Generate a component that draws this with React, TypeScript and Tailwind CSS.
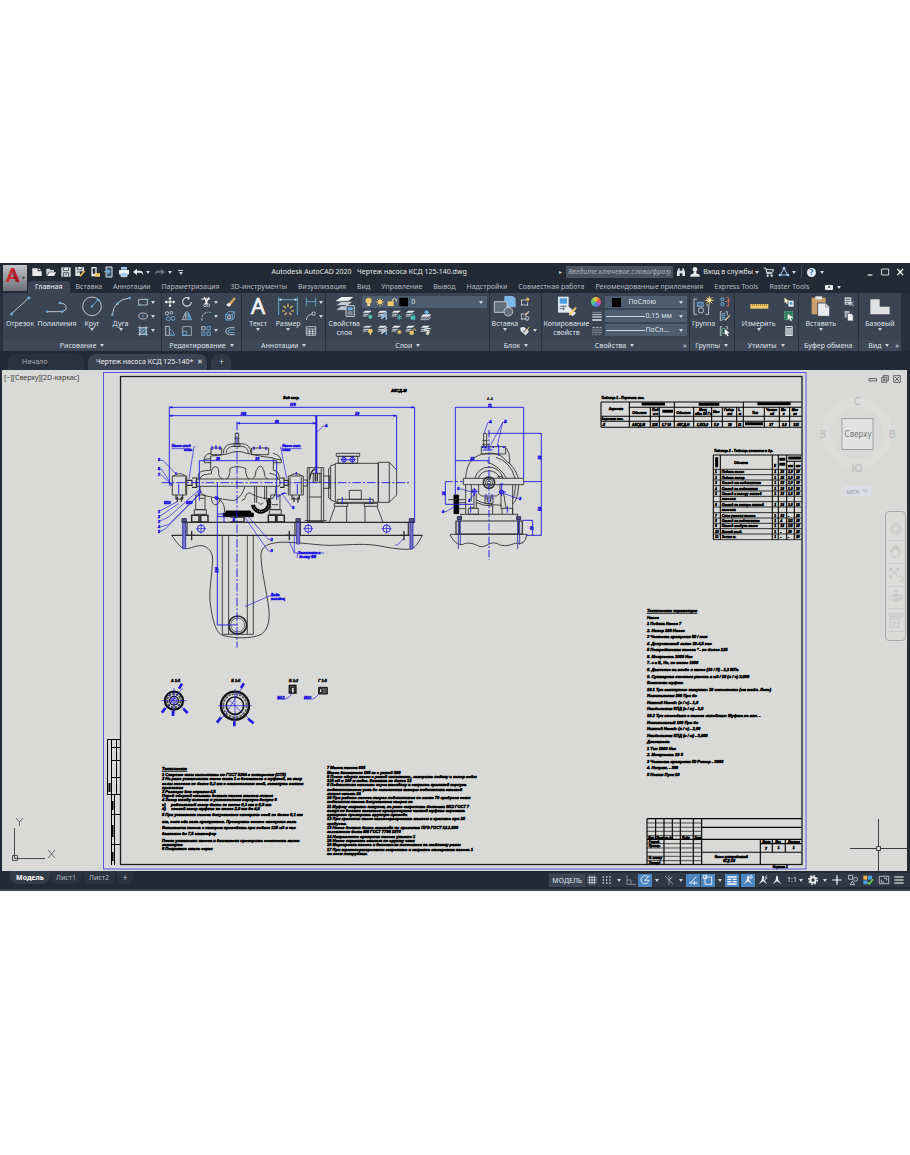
import type { ReactNode } from "react";

const L = "#d3d8de";
const B = "#74b6e6";
const Y = "#f3c969";

/* ---------- small helpers ---------- */

const Small = ({ children }: { children: ReactNode }) => (
  <svg viewBox="0 0 36 36" className="size-3 shrink-0" fill="none" stroke={L} strokeWidth="2.4">
    {children}
  </svg>
);

const Big = ({ children }: { children: ReactNode }) => (
  <svg viewBox="0 0 72 66" className="h-[22px] w-6 shrink-0 overflow-visible" fill="none" stroke={L} strokeWidth="2.6">
    {children}
  </svg>
);

const Arrow = () => (
  <svg viewBox="0 0 10 7" className="h-[3px] w-1 shrink-0" fill="#cfd4da">
    <path d="M0 0h10L5 7z" />
  </svg>
);

const Tool = ({ name, children, arrow }: { name: string; children: ReactNode; arrow?: boolean }) => (
  <button aria-label={name} className="flex items-center gap-0.5">
    <Small>{children}</Small>
    {arrow && <Arrow />}
  </button>
);

const BigTool = ({
  label,
  className,
  arrow,
  children,
}: {
  label: string;
  className: string;
  arrow?: boolean;
  children: ReactNode;
}) => (
  <button className={"flex shrink-0 flex-col items-center pt-0.5 text-center leading-[9px] " + className}>
    <Big>{children}</Big>
    <span className="mt-0.5 whitespace-pre">{label}</span>
    {arrow && (
      <span className="flex">
        <Arrow />
      </span>
    )}
  </button>
);

const Column = ({ children }: { children: ReactNode }) => (
  <div className="mt-0.5 grid h-[43px] grid-rows-3 items-center">{children}</div>
);

const Panel = ({
  title,
  className,
  arrow = true,
  more,
  children,
}: {
  title: string;
  className: string;
  arrow?: boolean;
  more?: boolean;
  children: ReactNode;
}) => (
  <section className={"flex shrink grow flex-col bg-[#3b4453] " + className}>
    <div className="flex h-[47px]">{children}</div>
    <button className="flex h-[11px] w-full items-center justify-center gap-1 bg-[#3f4857] leading-[11px]">
      {more && <span className="flex-1" />}
      {title}
      {arrow && <Arrow />}
      {more && <span className="flex-1 pr-0.5 text-right">»</span>}
    </button>
  </section>
);

/* ---------- title bar ---------- */

const TitleBar = () => (
  <div className="flex h-[18px] items-center">
    <div className="flex items-center gap-0.5 pl-[3px]">
      <button aria-label="Создать">
        <Small>
          <path d="M4 7h16v9h12v14H4z" fill="#e8ebee" stroke="none" />
          <path d="M23 6l8 7h-8z" fill="#e8ebee" stroke="none" />
        </Small>
      </button>
      <button aria-label="Открыть">
        <Small>
          <path d="M4 29V8h10l3 4h10v5H12z" fill="#cfd4da" stroke="none" />
          <path d="M13 19h20l-6 11H6z" fill="#e8ebee" stroke="none" />
        </Small>
      </button>
      <button aria-label="Сохранить" className="ml-px">
        <Small>
          <path d="M4 4h28v28H4z" fill="#dfe3e7" stroke="none" />
          <path d="M10 4v10h16V4M10 32V20h16v12M14 25h8" stroke="#2a3440" />
        </Small>
      </button>
      <button aria-label="Сохранить как">
        <Small>
          <path d="M4 3h26v13H18v14H4z" fill="#dfe3e7" stroke="none" />
          <path d="M10 3v8h14V3M9 18h9" stroke="#2a3440" />
          <path d="M32 14L18 31" stroke="#f0b45c" strokeWidth="5" />
        </Small>
      </button>
      <button aria-label="Открыть из веб" className="ml-px">
        <Small>
          <path d="M7 3h16v28H7z" fill="#dfe3e7" stroke="none" />
          <path d="M11 7h8v16h-8z" fill="#2a3440" stroke="none" />
          <path d="M18 20h5l2 2h8v10H18z" fill={Y} stroke="none" />
        </Small>
      </button>
      <button aria-label="Сохранить в веб">
        <Small>
          <path d="M9 3h18v30H9z" fill="#3a5670" stroke="#dfe3e7" strokeWidth="3" />
          <path d="M4 17h14M13 11l7 6-7 6" stroke="#74b6e6" strokeWidth="4" />
        </Small>
      </button>
      <button aria-label="Печать" className="ml-px">
        <Small>
          <path d="M9 3h18v8H9z" fill="#9ccbee" stroke="none" />
          <path d="M3 12h30v13H3z" fill="#eef0f2" stroke="none" />
          <path d="M9 20h18v12H9z" fill="#9ccbee" stroke="#eef0f2" />
        </Small>
      </button>
      <button aria-label="Отменить" className="flex items-center gap-0.5">
        <Small>
          <path d="M3 18l12-10v6h9q9 0 10 13-4-7-10-7h-9v7z" fill="#e8ebee" stroke="none" />
        </Small>
        <Arrow />
      </button>
      <button aria-label="Повторить" className="ml-0.5 flex items-center gap-0.5">
        <Small>
          <path d="M33 18L21 8v6h-9q-9 0-10 13 4-7 10-7h9v7z" fill="#68717d" stroke="none" />
        </Small>
        <Arrow />
      </button>
      <button aria-label="Настройка панели" className="flex flex-col items-center gap-px pl-1">
        <span className="h-px w-[5px] bg-[#cfd4da]" />
        <Arrow />
      </button>
    </div>
    <h1 className="flex-1 pr-1 text-center whitespace-pre text-[#e3e6ea]">
      Autodesk AutoCAD 2020{"   "}Чертеж насоса КСД 125-140.dwg
    </h1>
    <div className="flex items-center">
      <span className="mr-1 text-[6px]">▸</span>
      <input
        aria-label="Поиск"
        placeholder="Введите ключевое слово/фразу"
        className="h-3 w-[107px] bg-[#49525f] px-0.5 text-[7px] italic outline-none placeholder:text-[#a9b0b9]"
      />
      <button aria-label="Найти" className="ml-0.5">
        <Small>
          <path d="M6 30V18l4-11h4v23zM30 30V18L26 7h-4v23zM14 14h8v8h-8z" fill="#dfe3e7" stroke="none" />
        </Small>
      </button>
      <button className="ml-0.5 flex items-center gap-0.5 whitespace-nowrap text-[#e3e6ea]">
        <Small>
          <circle cx="18" cy="10" r="7" fill="#e8ebee" stroke="none" />
          <path d="M14 16h8v6l10 4v6H4v-6l10-4z" fill="#e8ebee" stroke="none" />
        </Small>
        Вход в службы
        <Arrow />
      </button>
      <button aria-label="Магазин" className="ml-1">
        <Small>
          <path d="M2 6h6l4 17h16M9 11h23l-4 8H12" stroke="#dfe3e7" strokeWidth="3" />
          <circle cx="14" cy="29" r="2.5" fill="#dfe3e7" />
          <circle cx="26" cy="29" r="2.5" fill="#dfe3e7" />
        </Small>
      </button>
      <button aria-label="Autodesk App Store" className="ml-[3px] flex items-center gap-0.5">
        <Small>
          <path d="M18 7L7 27h22z" stroke="#a8cdf2" strokeWidth="3" />
          <g fill="#a8cdf2" stroke="none">
            <circle cx="18" cy="7" r="4" />
            <circle cx="6" cy="27" r="4" />
            <circle cx="30" cy="27" r="4" />
          </g>
        </Small>
        <Arrow />
      </button>
      <span className="mx-[5px] h-3 w-px bg-[#46505d]" />
      <button aria-label="Справка" className="flex items-center gap-1">
        <span className="flex size-[9px] items-center justify-center rounded-full bg-[#e6eef8] text-[8px] leading-none font-bold text-[#2f5f9e]">
          ?
        </span>
        <Arrow />
      </button>
      <div className="ml-10 flex items-center gap-[3px] pr-1">
        <button aria-label="Свернуть">
          <Small>
            <path d="M11 27h14" stroke="#fff" strokeWidth="3.5" />
          </Small>
        </button>
        <button aria-label="Развернуть">
          <Small>
            <path d="M8 9h21v18H8z" stroke="#fff" />
          </Small>
        </button>
        <button aria-label="Закрыть">
          <Small>
            <path d="M10 9l17 18M27 9L10 27" stroke="#fff" strokeWidth="3.5" />
          </Small>
        </button>
      </div>
    </div>
  </div>
);

const ribbonTabs = [
  "Вставка",
  "Аннотации",
  "Параметризация",
  "3D-инструменты",
  "Визуализация",
  "Вид",
  "Управление",
  "Вывод",
  "Надстройки",
  "Совместная работа",
  "Рекомендованные приложения",
  "Express Tools",
  "Raster Tools",
];

const RibbonTabs = () => (
  <nav className="flex h-3 text-[#b4bac3]">
    <button className="rounded-t bg-[#3b4453] px-[7px] text-[#eef0f3]">Главная</button>
    <div className="flex gap-[11px] pl-1.5">
      {ribbonTabs.map((t) => (
        <button key={t} className="whitespace-nowrap">
          {t}
        </button>
      ))}
    </div>
    <button aria-label="Свернуть ленту" className="ml-4 flex items-center gap-1">
      <span className="flex h-[5px] w-2 items-center justify-center rounded-[1px] bg-[#e8ebee]">
        <span className="size-0.5 rounded-full bg-[#2a3440]" />
      </span>
      <Arrow />
    </button>
  </nav>
);

/* ---------- ribbon ---------- */

const LayerStack = ({ children, top = "#e8ebee" }: { children?: ReactNode; top?: string }) => (
  <>
    <path d="M10 5h20l-8 6H2z" fill={top} stroke="none" />
    <path d="M4 16h16M2 21h14" strokeWidth="3" />
    {children}
  </>
);

const Ribbon = () => (
  <div className="flex gap-px bg-[#27303b] pr-[9px] pl-[3px] text-[#dde1e6]">
    <Panel title="Рисование" className="basis-[158px]">
      <BigTool label="Отрезок" className="w-[34px]">
        <path d="M10 57L62 9" stroke={L} />
        <path d="M8 55h5v5H8zM60 6h5v5h-5z" fill={B} stroke={B} />
      </BigTool>
      <BigTool label="Полилиния" className="w-10">
        <path d="M6 50h46q14-4 12-14-3-12-18-12" />
        <path d="M5 48h4v4H5zM50 48h4v4h-4zM42 22h4v4h-4z" fill={B} stroke={B} />
      </BigTool>
      <BigTool label="Круг" className="w-[30px]" arrow>
        <circle cx="36" cy="34" r="28" />
        <path d="M36 34l18-20" stroke={B} />
        <path d="M34 32h4v4h-4zM53 13h4v4h-4z" fill={B} stroke={B} />
      </BigTool>
      <BigTool label="Дуга" className="w-[27px]" arrow>
        <path d="M10 60Q14 14 62 9" />
        <path d="M8 57h4v4H8zM24 24h4v4h-4zM60 7h4v4h-4z" fill={B} stroke={B} />
      </BigTool>
      <div className="ml-[3px]">
        <Column>
          <Tool name="Прямоугольник" arrow>
            <path d="M5 10h26v17H5z" />
            <path d="M4 25h3v3H4zM29 9h3v3h-3z" stroke={B} />
          </Tool>
          <Tool name="Эллипс" arrow>
            <ellipse cx="18" cy="18" rx="13" ry="9" />
            <path d="M17 17h2v2h-2zM30 17h2v2h-2z" stroke={B} />
          </Tool>
          <Tool name="Штриховка" arrow>
            <path d="M8 8h20v20H8z" fill="#4c6a88" stroke={B} />
            <path d="M8 2v32M28 2v32M2 8h32M2 28h32M8 18L18 8M8 28L28 8M18 28l10-10" strokeWidth="1.8" />
          </Tool>
        </Column>
      </div>
    </Panel>

    <Panel title="Редактирование" className="basis-[79px]">
      <div className="ml-0.5">
        <Column>
          <Tool name="Перенести">
            <path d="M18 5v26M5 18h26" stroke="#fff" strokeWidth="3" />
            <path d="M18 2l5 7H13zM18 34l5-7H13zM2 18l7-5v10zM34 18l-7-5v10z" fill="#fff" stroke="none" />
          </Tool>
          <Tool name="Копировать">
            <circle cx="9" cy="10" r="5" />
            <circle cx="22" cy="8" r="4" />
            <circle cx="13" cy="26" r="6" stroke={B} />
            <circle cx="27" cy="25" r="6" stroke={B} />
          </Tool>
          <Tool name="Растянуть">
            <path d="M5 4h11v27H5z" />
            <path d="M16 12q15 6 15 19H16M20 24l6 5" stroke={B} />
          </Tool>
        </Column>
      </div>
      <div className="ml-[5px]">
        <Column>
          <Tool name="Повернуть">
            <path d="M24 6A13 13 0 1 0 31 18" strokeWidth="3.4" />
            <path d="M18 2l10 4-7 7z" fill={L} stroke="none" />
          </Tool>
          <Tool name="Зеркало">
            <path d="M14 7v22H4z" />
            <path d="M22 7v22h10z" fill="#3f7cb0" stroke={B} />
            <path d="M18 3v30" strokeDasharray="3 2" />
          </Tool>
          <Tool name="Масштаб">
            <path d="M5 5h26v26H5z" strokeWidth="2" />
            <path d="M5 19h12v12H5z" stroke={B} />
          </Tool>
        </Column>
      </div>
      <div className="ml-[7px]">
        <Column>
          <Tool name="Обрезать" arrow>
            <path d="M4 9h26" stroke="#fff" strokeWidth="3" />
            <path d="M13 3l9 22M27 4L16 24" stroke="#fff" strokeWidth="4" />
            <circle cx="15" cy="28" r="4" />
            <circle cx="25" cy="28" r="4" />
          </Tool>
          <Tool name="Сопряжение" arrow>
            <path d="M6 32V22Q8 8 24 7" strokeDasharray="8 3" />
            <path d="M26 7h7" stroke={B} />
          </Tool>
          <Tool name="Массив" arrow>
            <path d="M5 5h10v10H5z" />
            <path d="M21 5h10v10H21zM5 21h10v10H5zM21 21h10v10H21z" stroke={B} />
          </Tool>
        </Column>
      </div>
      <div className="ml-1.5">
        <Column>
          <Tool name="Стереть">
            <path d="M31 4L14 22l6 5L35 8z" fill="#e2a860" stroke="none" />
            <path d="M14 20l8 7-7 5-9-5z" fill="#f4f0e8" stroke="none" />
          </Tool>
          <Tool name="Расчленить">
            <path d="M5 14l8-9h18v16l-6 9H5zM5 14h20v16M25 14l6-9" stroke={B} />
            <path d="M11 18h9v8h-9z" />
          </Tool>
          <Tool name="Подобие">
            <path d="M32 8H17Q5 9 5 18t12 11h15" />
            <path d="M32 14H19q-7 0-7 4.500t7 4.500h13" stroke={B} />
          </Tool>
        </Column>
      </div>
    </Panel>

    <Panel title="Аннотации" className="basis-[83px]">
      <BigTool label="Текст" className="w-8" arrow>
        <text x="36" y="57" textAnchor="middle" fontSize="66" fontFamily="Noto Sans" fill="#f1f3f5" stroke="#f1f3f5" strokeWidth="2">
          A
        </text>
      </BigTool>
      <BigTool label="Размер" className="w-7" arrow>
        <path d="M8 6v54M64 6v54M8 14h56" stroke={B} />
        <path d="M8 14l8-4v8zM64 14l-8-4v8z" fill={L} stroke="none" />
        <path d="M36 26v10M22 32l8 8M50 32l-8 8M18 48h9M54 48h-9M26 60l6-7M46 60l-6-7" stroke={Y} strokeWidth="3.5" />
      </BigTool>
      <div className="ml-[3px]">
        <Column>
          <Tool name="Линейный размер" arrow>
            <path d="M4 5v26M32 5v26M4 17h28" stroke={B} />
          </Tool>
          <Tool name="Выноска" arrow>
            <path d="M4 30Q6 14 22 12" />
            <circle cx="26" cy="11" r="5" />
          </Tool>
          <Tool name="Таблица">
            <path d="M4 5h28v26H4zM4 12h28M4 19h28M4 25h28M13 12v19M23 12v19" />
          </Tool>
        </Column>
      </div>
    </Panel>

    <Panel title="Слои" className="basis-[163px]">
      <BigTool label={"Свойства\nслоя"} className="w-9">
        <path d="M28 6h36L48 19H10z" fill="#f1f3f5" stroke="none" />
        <path d="M28 19h36L48 32H10zM28 32h30L44 46H10z" fill="#c4c9d0" stroke="#3b4453" />
        <path d="M42 32h25v32H42z" fill="#3e4856" stroke="#dfe8f2" />
        <path d="M47 37h15v9H47z" fill="#6aafe0" stroke="none" />
        <path d="M47 51h15M47 57h15" />
      </BigTool>
      <div className="flex-1 pt-[3px] pr-0.5">
        <div className="flex h-3 items-center bg-[#4f5d70] pr-1">
          <svg viewBox="0 0 141 36" className="h-3 w-[47px] shrink-0">
            <circle cx="20" cy="14" r="9" fill={Y} />
            <path d="M16 22h8v8h-8z" fill="#f5e3b0" />
            <circle cx="54" cy="18" r="7" fill={Y} />
            <path d="M54 5v26M41 18h26M45 9l18 18M63 9L45 27" stroke={Y} strokeWidth="2" />
            <path d="M77 16h18v14H77z" fill={Y} />
            <path d="M92 16v-5q6-7 11 0v6" fill="none" stroke="#f5e3b0" strokeWidth="3" />
            <path d="M112 5h26v26h-26z" fill="#000" />
          </svg>
          <select aria-label="Слой" className="min-w-0 flex-1 appearance-none pl-0.5 text-[7px] leading-3 outline-none">
            <option>0</option>
          </select>
          <Arrow />
        </div>
        <div className="grid h-[29px] w-[72px] grid-cols-5 grid-rows-2 items-center">
          <Tool name="Отключить слой">
            <LayerStack>
              <circle cx="25" cy="23" r="6" fill="#4ec3b5" stroke="none" />
            </LayerStack>
          </Tool>
          <Tool name="Изолировать слой">
            <LayerStack>
              <path d="M14 22l16-12M12 29l18-12M28 22v10" stroke="#a8cdf2" strokeWidth="4" />
            </LayerStack>
          </Tool>
          <Tool name="Заморозить слой">
            <LayerStack>
              <path d="M25 17v15M18 21l14 8M32 21l-14 8" stroke="#4ec3b5" strokeWidth="3" />
            </LayerStack>
          </Tool>
          <Tool name="Блокировать слой">
            <LayerStack>
              <path d="M17 21h14v11H17z" fill="#4ec3b5" stroke="none" />
              <path d="M20 21v-4q4-5 8 0v4" stroke="#4ec3b5" />
            </LayerStack>
          </Tool>
          <Tool name="Сделать текущим">
            <path d="M10 16h24l-9 7H2z" fill="#e8ebee" stroke="none" />
            <path d="M2 27h22l8-6M2 32h22l8-6" />
            <path d="M20 3l8 7-8 7-8-7z" fill={B} stroke="none" />
          </Tool>
          <Tool name="Включить все слои">
            <LayerStack top="#c4c9d0">
              <circle cx="25" cy="21" r="7" fill={Y} stroke="none" />
              <path d="M25 26v7" stroke={Y} strokeWidth="4" />
            </LayerStack>
          </Tool>
          <Tool name="Отменить изоляцию">
            <LayerStack>
              <path d="M14 22l16-12M12 29l18-12" strokeWidth="4" />
              <path d="M28 22v10" stroke={B} strokeWidth="4" />
            </LayerStack>
          </Tool>
          <Tool name="Разморозить">
            <LayerStack>
              <circle cx="25" cy="24" r="4" fill={Y} stroke="none" />
              <path d="M25 16v16M17 24h16M19 18l12 12M31 18L19 30" stroke={Y} strokeWidth="1.6" />
            </LayerStack>
          </Tool>
          <Tool name="Разблокировать">
            <LayerStack>
              <path d="M14 21h12v11H14z" fill={Y} stroke="none" />
              <path d="M24 21v-4q4-5 8 0v4" stroke={Y} />
            </LayerStack>
          </Tool>
          <Tool name="Копировать свойства слоя">
            <LayerStack>
              <path d="M14 14h18M12 20h16" strokeWidth="4" />
              <path d="M20 22h10l-4 10h-8z" fill="#e9dcc8" stroke="none" />
            </LayerStack>
          </Tool>
        </div>
      </div>
    </Panel>

    <Panel title="Блок" className="basis-[51px]">
      <BigTool label="Вставка" className="w-[29px]" arrow>
        <path d="M34 3h26l8 8v26H34z" fill="#7db9e8" stroke="none" />
        <path d="M4 20h38v32H4z" fill="#65707f" stroke={L} />
        <circle cx="46" cy="50" r="13" fill="#65707f" />
      </BigTool>
      <Column>
        <Tool name="Создать блок">
          <path d="M5 12h16M8 12v15h18M5 27h5M26 18v12" />
          <path d="M26 4v12M20 10h12M22 6l8 8M30 6l-8 8" stroke={Y} />
        </Tool>
        <Tool name="Редактор блоков">
          <path d="M5 12h16M8 12v15h18M5 27h5" />
          <circle cx="24" cy="25" r="6" />
          <path d="M30 4L18 17" stroke="#e9d2a4" strokeWidth="4" />
        </Tool>
        <Tool name="Атрибуты" arrow>
          <path d="M4 8l10-3 16 14-10 12L5 18z" fill="#e8ebee" stroke="none" />
          <path d="M12 16l4 6 6-12" stroke="#3b4453" />
          <path d="M32 5L20 20" stroke={Y} strokeWidth="3" />
        </Tool>
      </Column>
    </Panel>

    <Panel title="Свойства" className="basis-[146px]" more>
      <BigTool label={"Копирование\nсвойств"} className="w-12">
        <path d="M12 5h32v48H12z" fill="#dfe8f2" stroke="none" />
        <path d="M17 10h22v16H17z" fill="#4c9ddb" stroke="none" />
        <path d="M17 34h22M17 41h22M28 30v16" stroke="#5c6673" />
        <path d="M34 36h12l20 18-10 10-22-20z" fill="#e8ebee" stroke="none" />
        <path d="M66 38L46 60" stroke={Y} strokeWidth="6" />
      </BigTool>
      <div className="ml-px">
        <Column>
          <button aria-label="Цвет" className="size-2.5 rounded-full bg-[conic-gradient(#f5c842,#e8553d,#b457c9,#4a7be0,#46c0b4,#7fcf4f,#f5c842)]" />
          <Tool name="Вес линий">
            <path d="M4 7h28" strokeWidth="1.500" />
            <path d="M4 14h28" strokeWidth="3" />
            <path d="M4 21h28" strokeWidth="4" />
            <path d="M4 30h28" strokeWidth="5" />
          </Tool>
          <Tool name="Тип линий">
            <path d="M4 8h28" strokeDasharray="8 3" />
            <path d="M4 15h28M4 22h28" strokeDasharray="4 2" />
            <path d="M4 29h28" strokeDasharray="2 2" />
          </Tool>
        </Column>
      </div>
      <div className="ml-0.5 flex flex-1 flex-col gap-0.5 pt-[3px] pr-0.5">
        <div className="flex h-3 items-center bg-[#4f5d70] pr-1 pl-[7px]">
          <span className="size-[9px] bg-black" />
          <select aria-label="Цвет объекта" className="min-w-0 flex-1 appearance-none pl-[7px] text-[7px] outline-none">
            <option>ПоСлою</option>
          </select>
          <Arrow />
        </div>
        <div className="flex h-3 items-center bg-[#4f5d70] pr-1 pl-px">
          <span className="h-px w-[39px] bg-[#d3d8de]" />
          <select aria-label="Вес линии" className="min-w-0 flex-1 appearance-none text-[7px] outline-none">
            <option>0.15 мм</option>
          </select>
          <Arrow />
        </div>
        <div className="flex h-3 items-center bg-[#4f5d70] pr-1 pl-px">
          <span className="h-px w-[39px] bg-[#d3d8de]" />
          <select aria-label="Тип линии" className="min-w-0 flex-1 appearance-none text-[7px] outline-none">
            <option>ПоСл...</option>
          </select>
          <Arrow />
        </div>
      </div>
    </Panel>

    <Panel title="Группы" className="basis-11">
      <BigTool label="Группа" className="w-7">
        <path d="M16 12H6v46h10M42 30h8v28H40" />
        <path d="M16 22h18v12H16z" fill="#4c6a88" stroke={B} />
        <circle cx="27" cy="46" r="8" />
        <path d="M52 3v26M39 16h26M43 7l18 18M61 7L43 25" stroke={Y} strokeWidth="3" />
        <circle cx="52" cy="16" r="6" fill="#f7dfa0" stroke="none" />
      </BigTool>
      <div className="ml-px">
        <Column>
          <Tool name="Разгруппировать">
            <path d="M6 6h8v8H6zM6 20h8v8H6z" stroke={B} />
            <path d="M22 5h7v25h-7M18 17l14-4" stroke="#e0705c" />
          </Tool>
          <Tool name="Редактировать группу">
            <path d="M9 5H4v26h5M20 5h5v10" />
            <path d="M9 10h8v8H9zM9 22h8v6H9z" stroke={B} />
            <path d="M32 16L18 31" stroke="#e9d2a4" strokeWidth="4" />
          </Tool>
          <Tool name="Выбор группы">
            <path d="M9 5H4v26h5M20 5h5v8" />
            <path d="M9 10h8v16H9z" stroke="#5cc79a" />
            <path d="M18 12l14 13h-7l4 8-4 1-3-8-4 4z" fill="#fff" stroke="none" />
          </Tool>
        </Column>
      </div>
    </Panel>

    <Panel title="Утилиты" className="basis-[63px]">
      <BigTool label="Измерить" className="w-12" arrow>
        <path d="M10 27h54v14H10z" fill={Y} stroke="none" />
        <path d="M16 27v6M22 27v6M28 27v6M34 27v6M40 27v6M46 27v6M52 27v6M58 27v6" stroke="#6c5a2c" strokeWidth="2" />
      </BigTool>
      <Column>
        <Tool name="Быстрый выбор">
          <path d="M16 14h16v18H16z" fill="#e8ebee" stroke="none" />
          <path d="M20 18h8v8h-8z" fill="#4c9ddb" stroke="none" />
          <path d="M5 6l12 9-5 1 2 6-3 1-3-6-3 3z" fill="#fff" stroke={Y} strokeWidth="1" />
        </Tool>
        <Tool name="Выбрать все">
          <path d="M5 5h24v24H5z" fill="#2e7a5c" stroke="#5cc79a" strokeDasharray="5 2" />
          <path d="M14 11l17 12-8 1 4 8-4 1-4-8-5 4z" fill="#fff" stroke="none" />
        </Tool>
        <Tool name="Калькулятор">
          <path d="M7 3h22v30H7z" fill="#dfe3e7" stroke="none" />
          <path d="M10 8h16" stroke="#4a5462" strokeWidth="4" />
          <path d="M10 15h16M10 21h16M10 27h16" stroke="#4a5462" strokeWidth="3" strokeDasharray="4 2" />
        </Tool>
      </Column>
    </Panel>

    <Panel title="Буфер обмена" className="basis-[59px]" arrow={false}>
      <BigTool label="Вставить" className="w-11" arrow>
        <path d="M8 8h42v50H8z" fill="#c99f6b" stroke="none" />
        <path d="M19 4h20v9H19z" fill="#e8ebee" stroke="none" />
        <path d="M26 24h24l12 12v28H26z" fill="#e8ebee" stroke="#3b4453" />
        <path d="M50 24v12h12" stroke="#8b939e" />
      </BigTool>
      <Column>
        <Tool name="Вырезать">
          <path d="M5 4h20v22H5z" fill="#cfd4da" stroke="none" />
          <path d="M8 10h14M8 16h14M8 22h8" stroke="#4a5462" />
          <path d="M20 16l12 14M32 16L20 30" />
        </Tool>
        <Tool name="Копировать">
          <path d="M5 3h15v20H5z" fill="#aab1ba" stroke="none" />
          <path d="M13 10h11l7 6v17H13z" fill="#eef0f2" stroke="#3b4453" />
        </Tool>
      </Column>
    </Panel>

    <Panel title="Вид" className="basis-[42px]" more>
      <BigTool label="Базовый" className="w-full" arrow>
        <path d="M7 13h28v22h30v23H7z" fill="#dfe1e2" stroke="none" />
      </BigTool>
    </Panel>
  </div>
);

const FileTabs = () => (
  <div className="flex h-[19px] items-end gap-1 bg-[#222b35] pl-2 text-[#c6cbd2]">
    <button className="h-4 w-[76px] rounded-t-lg bg-[#29323d] pl-3.5 text-left text-[#a9b0b9]">Начало</button>
    <div className="flex h-4 items-center gap-1 rounded-t-lg bg-[#3b4453] pr-1 pl-2 text-[#eef0f3]">
      <button>Чертеж насоса КСД 125-140*</button>
      <button aria-label="Закрыть чертеж">✕</button>
    </div>
    <button aria-label="Новый чертеж" className="h-4 w-5 rounded-t-lg bg-[#303945] text-[9px]">
      +
    </button>
  </div>
);

/* ---------- drawing ---------- */

const workNotes: [number, string][] = [
  [325, "Технические"],
  [343, "1 Сварные швы выполнить по ГОСТ 5264 с контролем (ОТК)"],
  [356, "2 На раме установить насос типа 1 и двигатель с муфтой, на валу"],
  [369, "валы насосов не более 0,2 мм с отклонением осей, затянуть винты"],
  [381, "крепления"],
  [394, "3 Размеры для справок 4,5"],
  [407, "Перед сборкой смазать детали насоса маслом литол"],
  [419, "4 Зазор между колесом и уплотнением корпуса допуск 6"],
  [432, "а)     радиальный зазор быть не менее 0,3 мм и 0,5 мм"],
  [445, "б)     осевой зазор муфты не менее 2,0 мм до 4,0"],
  [463, "5 При установке насоса допускается смещение осей не более 0,1 мм"],
  [483, "мм, если оба вала вращаются. Проверить осевое смещение вала"],
  [502, "Испытания насоса с напором проводить при подаче 125 м3 в час"],
  [521, "давление до 7,5 атмосфер"],
  [540, "После установки насоса и двигателя проверить соосность валов"],
  [552, "затянуть"],
  [565, "6 Покрытие эмаль серая"],
];

const pumpNotes: [number, string][] = [
  [53, "7 Масса насоса 635"],
  [67, "Масса двигателя 165 кг с рамой 300"],
  [79, "8 После сборки насос с рамой испытать, замерить подачу и напор воды"],
  [91, "125 м3 и 140 м воды. Затяжка не более 12"],
  [104, "9 Подшипники смазать через маслёнку и закрыть крышкой корпуса"],
  [118, "подшипникового узла до заполнения камеры подшипника смазкой"],
  [130, "литол смазка 24"],
  [142, "10 При работе насоса нагрев подшипников не выше 70 градусов сети"],
  [155, "подшипник насоса допускается нагрев не"],
  [168, "11 Муфту закрыть кожухом, на раме закрепить болтами М12 ГОСТ 7"],
  [181, "кожух не должен касаться вращающихся частей муфты агрегата"],
  [193, "вращение проверить вручную привода"],
  [206, "12 При хранении насос законсервировать маслом и хранить при 25"],
  [220, "градусов."],
  [232, "13 Насос должен быть заземлён по правилам ПУЭ ГОСТ 12.1.030"],
  [245, "заземление болт М8 ГОСТ 7798 1970"],
  [258, "14 Направление вращения насоса указано 1"],
  [271, "15 Насос окрасить эмалью по грунту слоя"],
  [284, "16 Маркировка насоса и двигателя наносится на табличку рамы"],
  [297, "17 При транспортировании закрепить и закрыть отверстия насоса 1"],
  [310, "по всем патрубкам."],
];

const techData = [
  "Технические параметры",
  "Насос",
  "1 Подача Насос 7",
  "2. Напор 100 Насос",
  "3 Частота вращения 50 / мин",
  "4. Допускаемый запас 10-4,5 нас",
  "5 Потребляемая насоса   * -  не более 125",
  "6. Мощность 1000 Нас",
  "7. с а Б, Нс, не менее 1000",
  "8. Давление на входе в насос (10 / П) - 1,2 МПа",
  "9. Суммарная внешняя утечка в м3 / 10 (л / ч) 3,000",
  "Комплект муфта",
  "10.1 Три замкнутые катушки: 10 исполнение (см табл. Лопа)",
  "Номинальная 100 При бо",
  "Нижний Насад: (л / ч) - 1,0",
  "Наибольшая КПД (г / м) - 3,0",
  "10.2 Три способами с насосе линейных: Муфта не вкл. -",
  "Номинальный 100 При бо",
  "Нижний Насад: (л / ч) - 2,00",
  "Наибольшая КПД (г / м) - 3,000",
  "Двигатель",
  "1 Тип 1000 Нас",
  "2. Мощность 10 5",
  "3 Частота вращения 50 Ротор - 3000",
  "4. Напряж. - 380",
  "5 Номин Пуск 10",
];

const partsList = [
  ["1", "Подача насос", "1", "25", "1,0"],
  ["2", "Подача напор", "1", "25", "1,0"],
  ["3", "Отвод от подшипника", "1", "18", "1,0"],
  ["4", "Отвод на подшипник", "1", "18", "1,0"],
  ["5", "Отвод к напору линией", "1", "18", "1,0"],
  ["", "насосом", "", "", ""],
  ["6", "Отвод на напоре линией", "1", "18", "1,0"],
  ["", "насосом", "", "", ""],
  ["7", "Слив утечек насоса", "1", "18", "-"],
  ["8", "Отвод из подшипника", "1", "4", "1/2"],
  ["9", "Отвод воздуха насос", "1", "18", "1/2"],
  ["10", "Выход возд.", "1", "-", "10"],
  ["11", "Залив м.", "1", "-", "-"],
];

const FrontView = () => (
  <g transform="translate(100 370) scale(.3333)" fill="none" stroke="#2b2b2b" strokeWidth="2.6">
    {/* foundation, frame and pit */}
    <path d="M245 457h700M215 496h752M261 457v39M925 457v39M585 457v39M601 457v39" strokeWidth="3.400" />
    <path d="M215 496C235 525 245 538 262 536C280 532 290 526 305 527C325 530 338 545 338 570C335 620 328 660 330 690C335 740 345 790 370 797C410 806 450 806 480 795C500 785 510 760 507 720C500 660 485 610 483 560C482 530 500 520 540 517C600 515 660 528 700 526C760 524 800 520 840 528C880 536 915 540 935 537C950 530 960 510 967 496" />
    <path d="M367 496v297h93V496M386 496v297M442 496v297" />
    <circle cx="413" cy="765" r="27" strokeWidth="5" />
    <circle cx="413" cy="765" r="21" strokeWidth="2" />
    {/* motor */}
    <path d="M706 280h129v117H706zM835 277h33v120h-33zM868 277l22 23v75l-22 22M706 283l-14 4v103l14 5M692 292l-6 4v88l6 3" />
    <path d="M709 250h70v9h-70zM715 259h58v21h-58zM748 361h36v27h-36zM712 388h108v12H712zM703 400h40v9h-40zM793 400h40v9h-40z" />
    <path d="M705 409l-17 48M740 409v48M795 409v48M831 409l18 48" />
    {/* coupling guard */}
    <path d="M622 293h49v162h-49zM628 293v162M664 293v162M628 381h36M614 452h66M671 318h18v37h-18M610 330h12v18h-12M636 310h28M636 337h28M640 310v27M660 310v27" />
    <path d="M629 330Q632 300 646 297M652 310v24M646 310v24" strokeWidth="4" />
    {/* bearings and shaft */}
    <path d="M217 318h43v57h-43zM565 318h45v57h-45zM221 318q18-14 36 0M569 318q18-14 38 0M257 322v50M570 322v50M604 322v50" />
    <path d="M260 331h16v15h-16M276 324h14v28h-14M540 324h12v28h-12M552 331h13v15h-13M228 375v12h20v-12M576 375v12h22v-12M232 380v16M244 380v16M582 380v16M594 380v18" strokeWidth="3.500" />
    {/* casing */}
    <rect x="288" y="327" width="252" height="22" rx="6" />
    <path d="M295 327v-14q2-12 37-12V258q30-2 50-6q30-14 58-2q44 10 80 14v37q18 0 18 26" />
    <path d="M300 327q4-14 22-14l12-2q2-22 12-21q12 0 10 24q2 10 12 13M378 327q12-2 12-32q20-10 47 0q0 30 12 32M458 327q10-6 10-24q14-30 24 0q0 18 10 24M508 310q22 2 26 17" />
    <path d="M313 278q-4-26 20-28M311 268l22-2M313 278h20M545 278q-2-24-26-28M545 270l-24-4M543 278h-22" />
    <path d="M333 234h32v20h-32zM455 234h51v20h-51zM370 250q0-28 30-29h25q27 1 28 29M378 250q2-20 22-21h24q20 1 21 21M406 190h10v31h-10zM402 221h18v8h-18zM404 205h14" />
    <path d="M300 349q-2 26 20 29q40 10 80 14q26-8 35-43M435 380q10-18 22-7q30 16 62 12q10-14 9-36M425 392q14-6 12-12M334 384q2 20 12 20q12 0 14-18M360 390q14 10 14 36" />
    <path d="M464 349v50M494 349v40M470 349v50M500 349v40M476 398q4 10 14 0" />
    <path d="M459 404A24 24 0 1 0 503 388" stroke="#000" strokeWidth="12" />
    <path d="M459 404A24 24 0 1 0 503 388" stroke="#d9dad8" strokeWidth="2" strokeDasharray="4 3" />
    <path d="M287 375h28v44h-28zM283 419h36v14h-36zM300 385h12M512 375h28v44h-28zM508 419h36v14h-36zM516 404h18" />
    <path d="M275 436h22v20h-22zM302 436h22v20h-22zM505 436h22v20h-22zM531 436h22v20h-22z" strokeWidth="4.500" />
    <path d="M370 429h90v11h-90zM378 423h74v6h-74z" fill="#000" stroke="#000" />
    <path d="M391 441h41v15h-41M262 496h26M275 483v28M555 496h26M568 483v28M899 496h26M912 483v28" strokeWidth="4" />
    {/* dimensions and leaders */}
    <g stroke="#2118e0" strokeWidth="2.800">
      <path d="M208 112h736M208 137h682M411 160h237M298 272h232M208 110v230M944 112v345M890 137v163M298 272v120M530 272v118M352 338v427h61M352 432h22M352 440h22M372 440v18" />
      <path d="M649 137v174" strokeWidth="6" />
      <path d="M411 155v678" strokeDasharray="26 6 6 6" />
      <path d="M185 338h745" strokeDasharray="26 6 6 6" />
      <path d="M176 270l14 2 38 40M176 297l10 2 28 45M176 315l8 0 32 30M176 425l56-30M176 441l60-40M176 455l30-14 84-75M176 472l30-8 92-92M176 487l20-10 104-105M215 236h57M286 230l-4 0-15 97M605 236h-62M542 230l18 96M651 187l19-19h12M578 414l-33-44M515 508h-10l-62-70M515 543h-10l-72-103M435 710l73-32h30M568 515l15 34h90M583 496v53M592 549v14M885 525h8l18-20" strokeWidth="2" />
      <circle cx="303" cy="476" r="11" />
      <circle cx="625" cy="476" r="11" />
      <circle cx="860" cy="476" r="11" />
      <path d="M288 476h30M303 461v30M610 476h30M625 461v30M845 476h30M860 461v30" strokeWidth="2" />
      <circle cx="732" cy="269" r="7" />
      <circle cx="757" cy="269" r="7" />
      <circle cx="212" cy="343" r="4" />
      <circle cx="298" cy="366" r="5" />
      <path d="M722 269h45M732 259v20M757 259v20M727 381v22M810 381v22M236 342v30M592 342v30M530 382l24-14M546 370h14" />
      <path d="M248 458v78h9v-78M590 458v64h9v-64M930 458v78h9v-78" stroke="#3a35b0" fill="#7774c4" />
      <path d="M246 446h13v10h-13zM588 446h13v10h-13zM928 446h13v10h-13z" stroke="#28285a" fill="#555580" />
      <path d="M336 228v12M348 226v12M360 228v12M462 230v10M480 226v12M498 230v10M228 306v8M589 306v8" strokeWidth="4" />
      <path d="M208 112l9-3v6zM944 112l-9-3v6zM208 137l9-3v6zM890 137l-9-3v6zM411 160l9-3v6zM648 160l-9-3v6z" fill="#2118e0" strokeWidth="1" />
    </g>
    <g className="font-['Liberation_Sans'] text-[10px] font-bold italic" fill="#2118e0" stroke="#2118e0" strokeWidth="1.6">
      <text x="570" y="109">178</text>
      <text x="422" y="135">106</text>
      <text x="766" y="135">59</text>
      <text x="525" y="159">56</text>
      <text x="348" y="270">28</text>
      <text x="466" y="270">29</text>
      <text x="215" y="232">Насос вход</text>
      <text x="252" y="242">слив</text>
      <text x="547" y="232">Насос вых.</text>
      <text x="547" y="242">слив</text>
      <text x="192" y="402">М16</text>
      <text x="258" y="401">М20</text>
      <text x="675" y="172">А</text>
      <text x="512" y="513">2</text>
      <text x="512" y="547">3</text>
      <text x="577" y="418">6</text>
      <text x="398" y="453">Б</text>
      <text x="174" y="273">9</text>
      <text x="174" y="300">8</text>
      <text x="174" y="318">7</text>
      <text x="174" y="429">1</text>
      <text x="174" y="444">2</text>
      <text x="174" y="459">3</text>
      <text x="174" y="475">4</text>
      <text x="174" y="489">5</text>
      <text x="594" y="552">Заземление к</text>
      <text x="598" y="564">болту М8</text>
      <text x="513" y="677">Вода</text>
      <text x="513" y="690">колодец</text>
      <text transform="translate(354 608) rotate(-90)">120</text>
      <text transform="translate(354 390) rotate(-90)">45</text>
    </g>
    <g className="font-['Liberation_Sans'] text-[12px] font-bold italic" fill="#000" stroke="#000" strokeWidth="1.4">
      <text x="550" y="88" className="text-[10px]">
        Вид спер.
      </text>
      <text x="873" y="65">АКСД-М</text>
    </g>
  </g>
);

const SideView = () => (
  <g transform="translate(400 370) scale(.3333)" fill="none" stroke="#2b2b2b" strokeWidth="2.6">
    <path d="M190 325h181v19H190zM197 325Q200 255 262 250Q300 246 318 272Q345 290 355 325M288 262Q332 275 345 325M262 276Q300 290 320 325M315 232q16 12 14 48" />
    <path d="M244 230h73v22h-73zM251 190h9v40h-9zM246 224h22M248 212h14" />
    <circle cx="267" cy="338" r="17" strokeWidth="4.500" />
    <circle cx="267" cy="338" r="11" />
    <circle cx="267" cy="338" r="5" />
    <path d="M225 325A43 43 0 0 1 309 325M235 325A34 34 0 0 1 299 325M292 320h16v5M236 344v26l8 8h46l10-8v-26M255 380v20h24v-20M262 380v16M272 380v16" />
    <path d="M197 344v89M214 344v50M222 370v42l-8 3M229 370v45M205 415h30v18h-30zM338 344v89M311 370l7 45M303 370v45h35v18M306 415v18M230 390q20 14 75 16M230 398q20 10 48 10M278 405v28M356 344q-2 46-18 58M346 344q0 30-8 44" />
    <path d="M180 433h175M183 433v18M352 433v18" />
    <path d="M168 453h199v39H168zM178 453v39M356 453v39" strokeWidth="3.600" />
    <path d="M150 493h70M315 493h68M150 494q16 32 36 30C205 515 220 520 240 530C262 532 270 512 292 521C310 532 330 526 348 519Q376 528 380 494M220 493h95" />
    <path d="M162 375h14v56h-14z" fill="#000" stroke="#000" />
    <path d="M145 389h50M176 398h20M176 416h20" />
    <g stroke="#2118e0" strokeWidth="2.800">
      <path d="M166 112h205M166 112v263M371 112v213M264 190h160v306h-44M371 335h53M166 272h101M136 335v68M136 335h22M166 335h8M180 335h8M136 403h84M368 451h30v45" />
      <path d="M267 180v390" strokeDasharray="22 6 6 6" />
      <path d="M252 190l12-33h12M272 226l36-69h12M292 226l16-69M130 425h8l28-16M174 357h10l34 10M207 390l16-18M362 385h-10l-44-16" strokeWidth="2" />
      <circle cx="223" cy="364" r="6" />
      <circle cx="305" cy="366" r="6" />
      <path d="M213 364h20M223 354v24M305 342v36M300 342h10M296 366h22M248 240h30M252 234h20M296 230v28M212 408v20M322 408v20M258 372v16M276 372v16" />
      <path d="M175 440v97M181 440v84M353 440v97M359 440v84" stroke="#3a35b0" />
      <path d="M172 440h12v9h-12zM350 440h12v9h-12z" stroke="#28285a" fill="#555580" />
      <path d="M248 228v6M256 228v6M280 228v6M295 224v8M311 228v6" strokeWidth="5" />
    </g>
    <g className="font-['Liberation_Sans'] text-[10px] font-bold italic" fill="#2118e0" stroke="#2118e0" strokeWidth="1.6">
      <text x="264" y="110">71</text>
      <text x="211" y="271">35</text>
      <text x="268" y="160">А</text>
      <text x="313" y="160">Б</text>
      <text x="172" y="361">5</text>
      <text x="126" y="430">4</text>
      <text x="205" y="395">6</text>
      <text x="358" y="390">2</text>
      <text transform="translate(424 268) rotate(-90)">50</text>
      <text transform="translate(424 422) rotate(-90)">56</text>
      <text transform="translate(398 480) rotate(-90)">16</text>
      <text transform="translate(136 376) rotate(-90)">24</text>
    </g>
    <text x="260" y="89" className="font-['Liberation_Sans'] text-[11px] font-bold italic" fill="#000" stroke="none">
      А-А
    </text>
  </g>
);

const Details = () => (
  <g transform="translate(0 660) scale(.3333)" fill="none" stroke="#111" strokeWidth="3">
    <circle cx="522" cy="122" r="27" strokeWidth="7" />
    <circle cx="522" cy="122" r="20" strokeWidth="5" strokeDasharray="8 3" stroke="#444" />
    <circle cx="522" cy="122" r="13" strokeWidth="4" />
    <circle cx="705" cy="137" r="42" strokeWidth="7" />
    <circle cx="705" cy="137" r="35" strokeWidth="5" strokeDasharray="8 3" stroke="#555" />
    <circle cx="705" cy="137" r="26" strokeWidth="5" />
    <path d="M868 76h20v23h-20z" fill="#555" strokeWidth="4" />
    <path d="M874 82h9v17h-9z" fill="#d9dad8" />
    <path d="M956 82h26v20h-26z" fill="#555" strokeWidth="3" />
    <path d="M958 86h8v12h-8z" fill="#d9dad8" />
    <g stroke="#2118e0" strokeWidth="2">
      <circle cx="522" cy="122" r="8" />
      <path d="M484 122h76M522 84v80M502 102l40 40M548 84l-50 62M655 137h100M705 87v104M682 114l46 46M728 80l-56 90M544 140l18 16M500 142l-14 14M672 168l-20 16M738 168l22 20" />
      <path d="M832 117h26q10-4 20-18M912 117h26q10-4 18-14" />
      <path d="M537 86l9-15M723 84l9-14M486 158l10-14M519 152v16M550 146l13 13M651 188l12-16M703 184v15M744 176l17 14" strokeWidth="8" />
    </g>
    <g className="font-['Liberation_Sans'] text-[11px] font-bold italic" strokeWidth="1.4">
      <g fill="#2118e0" stroke="#2118e0">
        <text x="832" y="116">М12</text>
        <text x="912" y="116">М10</text>
      </g>
      <g fill="#000">
        <text x="513" y="65">А 1:5</text>
        <text x="694" y="65">Б 1:5</text>
        <text x="867" y="65">В 1:2</text>
        <text x="955" y="65">Г 1:5</text>
      </g>
    </g>
  </g>
);

const Tables = () => (
  <g transform="translate(590 370) scale(.3333)" fill="none" stroke="#000" strokeWidth="3.200">
    <path d="M33 96h602M118 112h517M33 139h602M33 154h602M33 172h602M33 96v76M118 96v76M181 112v60M208 112v60M253 96v76M311 112v60M365 112v60M397 112v60M440 112v60M460 96v76M523 112v60M568 112v60M599 112v60" />
    <path d="M370 255h265M590 274h45M370 255v254M391 255v254M547 255v254M565 255v254M590 255v254M613 274v235" />
    {Array.from({ length: 14 }, (_, i) => (
      <path key={i} d={`M370 ${298 + Math.round(i * 16.2)}h265`} strokeWidth="2.4" />
    ))}
    <path d="M155 102h70M326 103h62M502 101h100M465 161h54M217 124h32M595 264h38M568 268h18M568 283h18M380 262v30" strokeWidth="9" />
    <g className="font-['Liberation_Sans'] text-[10px] font-bold italic" fill="#000" strokeWidth="1.4">
      <text x="34" y="88">Таблица 1 - Перечень нас.</text>
      <text x="372" y="247">Таблица 2 - Таблица клапанов и др.</text>
      <text x="34" y="150">Агрегат нас.</text>
      <text x="36" y="167">-К</text>
      <text x="56" y="119">Агрегат</text>
      <text x="127" y="131">Обознач</text>
      <text x="186" y="122">Под</text>
      <text x="189" y="134">м.ч</text>
      <text x="259" y="131">Обознач</text>
      <text x="327" y="122">Мощ</text>
      <text x="315" y="134">кВт 50 Гц</text>
      <text x="369" y="128">Мас</text>
      <text x="402" y="122">Габар</text>
      <text x="412" y="134">мм</text>
      <text x="445" y="122">L</text>
      <text x="446" y="134">м</text>
      <text x="486" y="131">Тип</text>
      <text x="528" y="122">Часто</text>
      <text x="540" y="134">об</text>
      <text x="573" y="122">Мо</text>
      <text x="578" y="134">к</text>
      <text x="605" y="122">Мас</text>
      <text x="610" y="134">кг</text>
      <text x="432" y="281">Обознач</text>
      <text x="552" y="290">К</text>
      <text x="594" y="290">мм</text>
      <text x="617" y="290">мм</text>
      <text x="126" y="167">АКСД-М</text>
      <text x="186" y="167">125</text>
      <text x="215" y="167">1,7 10</text>
      <text x="260" y="167">АКСД-Н</text>
      <text x="320" y="167">1,5Х3,0</text>
      <text x="372" y="167">5,9</text>
      <text x="414" y="167">10</text>
      <text x="444" y="167">11</text>
      <text x="538" y="167">37</text>
      <text x="576" y="167">3,0</text>
      <text x="610" y="167">315</text>
      {partsList.map(([n, name, qty, d, g], i) => (
        <g key={i} transform={`translate(0 ${310 + Math.round(i * 16.2)})`}>
          <text x="375">{n}</text>
          <text x="395">{name}</text>
          <text x="553">{qty}</text>
          <text x="571">{d}</text>
          <text x="594">{g}</text>
          <text x="618">{g && "10"}</text>
        </g>
      ))}
    </g>
  </g>
);

const TitleBlock = () => (
  <g transform="translate(590 600) scale(.3333)" fill="none" stroke="#000" strokeWidth="3.400">
    <path d="M171 656h464M171 718h464M335 682h300M335 757h300M171 656v139M222 656v139M271 656v139M310 656v139M335 656v139M197 656v62M247 656v62M511 718v77M547 718v39M586 718v39M511 731h124" />
    <path d="M171 669h164M171 682h164M171 694h164M171 707h164M171 731h164M171 744h164M171 757h164M171 769h164M171 782h164" strokeWidth="2" />
    <g className="font-['Liberation_Sans'] text-[9px] font-bold italic" fill="#000" strokeWidth="1.4">
      <text x="175" y="716">Изм</text>
      <text x="199" y="716">Лист</text>
      <text x="225" y="716">№ до</text>
      <text x="276" y="716">Подп</text>
      <text x="313" y="716">Дат</text>
      <text x="176" y="728">Разраб.</text>
      <text x="176" y="741">Провер.</text>
      <text x="176" y="778">Н. контр</text>
      <text x="176" y="791">Утверд</text>
      <text x="517" y="728">Лист</text>
      <text x="556" y="728">Лис</text>
      <text x="594" y="728">Листов</text>
      <text x="526" y="748">у</text>
      <text x="563" y="748">1</text>
      <text x="608" y="748">1</text>
      <text x="374" y="774">Насос центробежный</text>
      <text x="400" y="786">КСД 125</text>
      <text x="548" y="805">Формат 1</text>
    </g>
  </g>
);

const Notes = () => (
  <g className="font-['Liberation_Sans'] text-[4px] font-bold italic" fill="#000" stroke="#000" strokeWidth=".5">
    {techData.map((line, i) => (
      <text key={i} x="647" y={612 + Math.round(i * 6.56)} textDecoration={i === 0 ? "underline" : undefined}>
        {line}
      </text>
    ))}
    {workNotes.map(([y, line]) => (
      <text key={y} x="162" y={Math.round(661.5 + y / 3)} className="whitespace-pre" textDecoration={y === 325 ? "underline" : undefined}>
        {line}
      </text>
    ))}
    {pumpNotes.map(([y, line]) => (
      <text key={y} x="327" y={Math.round(751.5 + y / 3)}>
        {line}
      </text>
    ))}
  </g>
);

const Drawing = () => (
  <svg viewBox="2 370 905 501" className="block h-auto w-full" fill="none">
    <path d="M103 370h703v2H103z" fill="#d2d2ee" />
    <rect x="103.500" y="372.500" width="702.500" height="496.500" stroke="#5a55dc" />
    <rect x="120.500" y="376.500" width="681.500" height="488" stroke="#1b1b1b" strokeWidth="1.300" />
    <FrontView />
    <SideView />
    <Details />
    <Tables />
    <TitleBlock />
    <Notes />
    {/* binding margin stamp */}
    <path d="M107.500 739.500h13M107.500 739.500V794M111.500 739.500V865M116.500 739.500V794M111 747.500h9M111 760.500h9M111 777.500h9M107 794.500h13M114.500 794V865M111 814.500h9M111 844.500h9" stroke="#000" />
    <path d="M109.500 783v9M112.500 801v9M112.500 825v12M112.500 852v9" stroke="#000" strokeWidth="2" />
    {/* coordinate system icon */}
    <path d="M14.500 828v30.500H45M12.500 855.500h5v5h-5z" stroke="#4a4a4a" />
    <path d="M16 818l3.500 4 3.500-4M19.500 822v4M48 850l7 8M55 850l-7 8" stroke="#4a4a4a" strokeWidth=".8" />
    {/* crosshair */}
    <path d="M850 848.500h26M881 848.500h26M878.500 819v27M878.500 851v20M876.500 846.500h4v4h-4z" stroke="#3c3c3c" />
    {/* view cube */}
    <circle cx="857" cy="433" r="31" stroke="#dddedc" strokeWidth="9" />
    <rect x="842" y="418.500" width="31" height="31" fill="#e1e2e1" stroke="#a2a3a2" />
    <g className="font-['Noto_Sans']" textAnchor="middle">
      <text x="858" y="437" className="text-[8px]" fill="#77797b">
        Сверху
      </text>
      <g className="text-[11px]" fill="#dfe0df" stroke="#bcbdbc" strokeWidth=".6">
        <text x="857" y="405">С</text>
        <text x="857" y="472">Ю</text>
        <text x="823" y="438">З</text>
        <text x="892" y="438">В</text>
      </g>
      <rect x="844" y="486" width="27" height="10" fill="#dcdde6" />
      <text x="853" y="494" className="text-[6px]" fill="#8f9096">
        МСК
      </text>
    </g>
    <path d="M863 490h5l-2.500 3z" stroke="#b0b1b6" strokeWidth=".6" />
  </svg>
);

const navTools: [string, ReactNode][] = [
  [
    "Штурвал",
    <g key="w">
      <circle cx="30" cy="30" r="18" />
      <rect x="20" y="20" width="20" height="20" rx="5" />
    </g>,
  ],
  ["Панорамирование", <path key="p" d="M16 34l-6-8q4-4 9 4V12q4-4 6 0v12V8q4-4 6 0v16V11q4-4 6 0v16l2-10q5-2 5 2l-3 20q-4 11-18 9Q18 48 16 34z" />],
  ["Зумирование", <path key="z" d="M10 8l28 30M38 8L10 38M10 18V8h10M30 8h8v10M10 30v8h10M42 34a8 8 0 1 1-1 14M48 48l6 8" />],
  ["Орбита", <path key="o" d="M30 6v46M24 14l6-8 6 8M8 34q22 18 44 0M12 28q18-12 38 0M46 22l6 12-12 2M22 26h16v12H22z" />],
  ["ShowMotion", <path key="s" d="M8 8h12v12H8zM24 8h12v12H24zM40 8h12v12H40zM10 26h30v28H10zM20 34l10 6-10 6z" />],
];

const Canvas = () => (
  <main className="relative mr-[3px] ml-0.5 bg-[#d9dad8]">
    <Drawing />
    <div className="absolute top-0.5 left-0.5 text-[#3a3a3a]">[−][Сверху][2D-каркас]</div>
    <div className="absolute top-[3px] right-1 flex">
      {["M6 17h23v7H6z", "M8 13h15v15H8zM13 13V8h15v15h-5M13 18h5v5h-5z", "M8 8h20v20H8zM12 12l12 12M24 12L12 24"].map((d, i) => (
        <button key={d} aria-label={["Свернуть окно", "Восстановить окно", "Закрыть окно"][i]}>
          <svg viewBox="0 0 36 36" className="size-3" fill="none" stroke="#555656" strokeWidth="2.8">
            <path d={d} />
          </svg>
        </button>
      ))}
    </div>
    <div className="absolute top-[141px] right-px flex h-[130px] w-[21px] flex-col items-center justify-between rounded-sm border border-[#a9aaa9] bg-[#dbdcda] py-2">
      {navTools.map(([name, icon]) => (
        <button key={name} aria-label={name} className="border-b border-[#cbcccb] pb-0.5">
          <svg viewBox="0 0 60 60" className="size-[18px]" fill="none" stroke="#bfc0bf" strokeWidth="2.400">
            {icon}
          </svg>
        </button>
      ))}
    </div>
  </main>
);

/* ---------- status bar ---------- */

const Mode = ({ name, on, children }: { name: string; on?: boolean; children: ReactNode }) => (
  <button
    aria-label={name}
    className={on ? "flex h-[13px] w-3.5 items-center justify-center bg-[#4d86bf]" : "flex h-[13px] w-3.5 items-center justify-center"}
  >
    <Small>{children}</Small>
  </button>
);

const Drop = () => (
  <span className="mx-[3px] flex">
    <Arrow />
  </span>
);

const Compass = ({ children }: { children?: ReactNode }) => (
  <>
    <path d="M16 5l4 0 2 13 9 13-13-9-13 9 9-13z" fill="#e8ebee" stroke="none" />
    {children}
  </>
);

const StatusBar = () => (
  <footer className="flex h-[20px] items-start border-b-2 border-[#3a4452] bg-[#222b35] pl-2.5 text-[#b4bac3]">
    <button className="h-[13px] w-10 rounded-b-lg bg-[#333d4a] font-bold text-white">Модель</button>
    <button className="h-[13px] w-8 rounded-b-lg bg-[#2a333e]">Лист1</button>
    <button className="ml-px h-[13px] w-8 rounded-b-lg bg-[#2a333e]">Лист2</button>
    <button aria-label="Новый лист" className="ml-0.5 h-[13px] w-4 rounded-b-lg bg-[#2a333e] text-[9px] leading-3">
      +
    </button>
    <div className="mt-0.5 ml-auto flex h-[14px] items-center bg-[#2f3945] pr-1 text-[#dfe3e7]">
      <button className="h-[13px] bg-[#3b4553] px-[3px] text-[7px] leading-[13px]">МОДЕЛЬ</button>
      <Mode name="Сетка">
        <path d="M4 11h28M4 18h28M4 25h28M11 4v28M18 4v28M25 4v28" />
      </Mode>
      <span className="w-px" />
      <Mode name="Привязка">
        <path d="M5 9h28M5 18h28M5 27h28" strokeDasharray="4 6" strokeWidth="4" />
      </Mode>
      <Drop />
      <Mode name="Орто">
        <path d="M6 4v27h27M6 18h12v13" stroke="#9aa3ae" />
      </Mode>
      <Mode name="Отслеживание полярное" on>
        <path d="M27 9A12 12 0 1 0 29 22M17 19L32 5M17 19h15" stroke="#fff" />
      </Mode>
      <Drop />
      <Mode name="Изометрия">
        <path d="M6 6l24 24M18 4v28" stroke="#9aa3ae" />
        <path d="M18 18l10-9" />
      </Mode>
      <Drop />
      <Mode name="Отслеживание привязки" on>
        <path d="M6 27h26M9 27L28 8M22 21v12" stroke="#fff" />
      </Mode>
      <span className="w-px" />
      <Mode name="Объектная привязка" on>
        <path d="M9 9h20v22H9zM4 4h10v10H4z" stroke="#fff" />
      </Mode>
      <Drop />
      <Mode name="Вес линий" on>
        <path d="M4 9h28M4 16h12M20 16h12M4 23h12M20 23h12M4 30h28" stroke="#fff" strokeWidth="4" />
      </Mode>
      <span className="w-0.5" />
      <Mode name="Видимость аннотаций" on>
        <Compass>
          <circle cx="27" cy="9" r="4" stroke="#fff" />
        </Compass>
      </Mode>
      <span className="w-px" />
      <Mode name="Автомасштаб">
        <Compass>
          <path d="M29 4l-5 7h6l-5 7" />
        </Compass>
      </Mode>
      <Mode name="Масштаб аннотаций">
        <Compass />
      </Mode>
      <button className="flex items-center gap-0.5 px-[3px]">
        1:1
        <Arrow />
      </button>
      <Mode name="Рабочее пространство">
        <circle cx="18" cy="18" r="8" stroke="#e8ebee" strokeWidth="6" />
        <circle cx="18" cy="18" r="13" stroke="#e8ebee" strokeWidth="4" strokeDasharray="5 5.200" />
      </Mode>
      <Drop />
      <Mode name="Монитор аннотаций">
        <path d="M18 4v28M4 18h28" stroke="#fff" strokeWidth="3.500" />
      </Mode>
      <span className="w-0.5" />
      <Mode name="Изолировать объекты">
        <path d="M5 4h12v12H5zM10 32l6-11 7 11z" />
        <circle cx="26" cy="16" r="6" />
      </Mode>
      <span className="w-px" />
      <Mode name="Производительность">
        <path d="M4 5h12v12H4z" fill="#e8b84a" stroke="none" />
        <path d="M18 5h12v12H18z" fill="#4c9ddb" stroke="none" />
        <path d="M4 19h12v12H4z" fill="#4c9ddb" stroke="none" />
        <path d="M16 24l6 6 11-14" stroke="#6cc55b" strokeWidth="5" />
      </Mode>
      <span className="w-0.5" />
      <Mode name="Очистить экран">
        <path d="M4 7h28v22H4zM18 13h8v6M18 24h-8v-6" />
      </Mode>
      <span className="w-px" />
      <Mode name="Адаптация">
        <path d="M4 9h28M4 18h28M4 27h28" stroke="#fff" strokeWidth="3.500" />
      </Mode>
    </div>
  </footer>
);

const App = () => {
  return (
    <div className="min-h-screen bg-white py-[263px] font-['Noto_Sans','Open_Sans',sans-serif] text-[7px] leading-3">
      <div className="bg-[#222b35]">
        <header className="flex">
          <button
            aria-label="Меню приложения"
            className="mt-0.5 mr-px ml-[3px] flex h-[26px] w-6 items-center bg-linear-to-b from-[#c3c6ca] to-[#6b7078]"
          >
            <svg viewBox="0 0 72 78" className="h-[26px] w-6">
              <text x="29" y="52" textAnchor="middle" fontSize="58" fontWeight="900" fontFamily="Lato" fill="#d0282e">
                A
              </text>
              <path d="M30 11l20 41H38L26 24z" fill="#7d1016" opacity=".55" />
              <path d="M56 36h10l-5 6z" fill="#2a3038" />
            </svg>
          </button>
          <div className="min-w-0 flex-1 text-[#cdd2d8]">
            <TitleBar />
            <RibbonTabs />
          </div>
        </header>
        <Ribbon />
        <FileTabs />
        <Canvas />
        <StatusBar />
      </div>
    </div>
  );
};

export default App;
